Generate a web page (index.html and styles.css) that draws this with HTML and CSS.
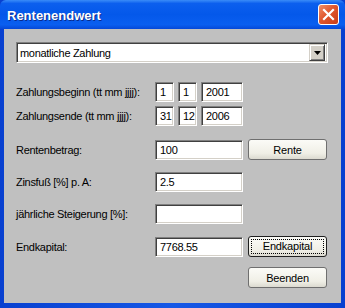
FILE: index.html
```html
<!DOCTYPE html>
<html lang="de">
<head>
  <meta charset="UTF-8">
  <title>Rentenendwert</title>
  <link rel="stylesheet" href="styles.css">
</head>
<body>
  <div class="window">
    <div class="titlebar">
      <span class="title">Rentenendwert</span>
      <div class="close">
        <svg width="13" height="13" viewBox="0 0 13 13">
          <path d="M2 2 L11 11 M11 2 L2 11" stroke="#fff" stroke-width="2.2" stroke-linecap="square"/>
        </svg>
      </div>
    </div>

    <div class="client">
      <div class="combo">
        <span class="combo-text">monatliche Zahlung</span>
        <div class="combo-btn">
          <svg width="7" height="4" viewBox="0 0 7 4"><path d="M0 0 H7 L3.5 4 Z" fill="#000"/></svg>
        </div>
      </div>

      <div class="row row-first">
        <label class="lbl">Zahlungsbeginn (tt mm jjjj):</label>
        <div class="field small">1</div>
        <div class="field small">1</div>
        <div class="field year">2001</div>
      </div>
      <div class="row row-date2">
        <label class="lbl">Zahlungsende (tt mm jjjj):</label>
        <div class="field small">31</div>
        <div class="field small">12</div>
        <div class="field year">2006</div>
      </div>

      <div class="row row-rente">
        <label class="lbl">Rentenbetrag:</label>
        <div class="field wide">100</div>
        <button class="btn">Rente</button>
      </div>
      <div class="row row-zins">
        <label class="lbl">Zinsfuß [%] p. A:</label>
        <div class="field wide">2.5</div>
      </div>
      <div class="row row-steig">
        <label class="lbl">jährliche Steigerung [%]:</label>
        <div class="field wide"></div>
      </div>
      <div class="row row-end">
        <label class="lbl">Endkapital:</label>
        <div class="field wide">7768.55</div>
        <button class="btn focused"><span>Endkapital</span></button>
      </div>
      <div class="row row-quit">
        <button class="btn">Beenden</button>
      </div>
    </div>
  </div>
</body>
</html>
```

FILE: styles.css
```css
body {
  margin: 0;
  padding: 0;
  font-family: 'Liberation Sans', Arial, sans-serif;
  font-size: 11px;
  color: #000;
  background: #fff;
}
.window {
  width: 345px;
  height: 308px;
  box-sizing: border-box;
  display: flex;
  flex-direction: column;
  background: linear-gradient(to right, #0840d0, #1658e6 50%, #0840d0);
}
.titlebar {
  height: 29px;
  display: flex;
  align-items: center;
  justify-content: space-between;
  padding: 0 6px 0 7px;
  background: linear-gradient(to bottom, #3a8cf8 0, #0c5fee 12%, #0458ea 50%, #0a5ff0 85%, #0548d8 100%);
  border-radius: 6px 6px 0 0;
}
.title {
  color: #fff;
  font-family: 'Liberation Sans', Arial, sans-serif;
  font-weight: bold;
  font-size: 13px;
  text-shadow: 1px 1px #0a2a8a;
  padding-top: 1px;
}
.close {
  width: 19px;
  height: 19px;
  border: 1px solid #fff;
  border-radius: 3px;
  background: linear-gradient(135deg, #f0906a, #e0572e 45%, #c83c18);
  display: flex;
  align-items: center;
  justify-content: center;
}
.client {
  flex: 1;
  margin: 0 4px 5px 4px;
  background: #c0c0c0;
  padding: 13px 0 0 12px;
  letter-spacing: -0.3px;
}
.combo {
  width: 312px;
  height: 21px;
  box-sizing: border-box;
  background: #fff;
  border-top: 1px solid #808080;
  border-left: 1px solid #808080;
  border-right: 1px solid #fff;
  border-bottom: 1px solid #fff;
  box-shadow: inset 1px 1px #404040, inset -1px -1px #d4d0c8;
  display: flex;
  align-items: center;
  justify-content: space-between;
  padding: 2px 2px 2px 3px;
}
.combo-btn {
  width: 16px;
  height: 17px;
  box-sizing: border-box;
  background: #d4d0c8;
  border-top: 1px solid #d4d0c8;
  border-left: 1px solid #d4d0c8;
  border-right: 1px solid #404040;
  border-bottom: 1px solid #404040;
  box-shadow: inset 1px 1px #fff, inset -1px -1px #808080;
  display: flex;
  align-items: center;
  justify-content: center;
}
.row {
  display: flex;
  align-items: center;
}
.lbl {
  width: 139px;
  flex-shrink: 0;
}
.field {
  height: 20px;
  box-sizing: border-box;
  background: #fff;
  border-top: 1px solid #808080;
  border-left: 1px solid #808080;
  border-right: 1px solid #fff;
  border-bottom: 1px solid #fff;
  box-shadow: inset 1px 1px #404040, inset -1px -1px #d4d0c8;
  padding: 3px 3px 0 4px;
  margin-right: 4px;
}
.small {
  width: 19px;
}
.year {
  width: 42px;
}
.wide {
  width: 88px;
  margin-right: 5px;
}
.btn {
  width: 79px;
  height: 21px;
  box-sizing: border-box;
  font-family: inherit;
  font-size: 11px;
  letter-spacing: -0.2px;
  color: #000;
  border: 1px solid #6f6f6f;
  border-radius: 3px;
  background: linear-gradient(to bottom, #fbfbf7, #f0efe6 70%, #dcdad0);
  padding: 0;
}
.btn.focused {
  border-color: #202020;
  padding: 2px;
}
.btn.focused span {
  display: block;
  height: 100%;
  box-sizing: border-box;
  border: 1px dotted #000;
  line-height: 13px;
}
.row-first {
  margin-top: 19px;
}
.row-date2 {
  margin-top: 4px;
}
.row-rente {
  margin-top: 13px;
}
.row-zins {
  margin-top: 12px;
}
.row-steig {
  margin-top: 12px;
}
.row-end {
  margin-top: 12px;
}
.row-quit {
  margin-top: 10px;
  padding-left: 232px;
}
```
